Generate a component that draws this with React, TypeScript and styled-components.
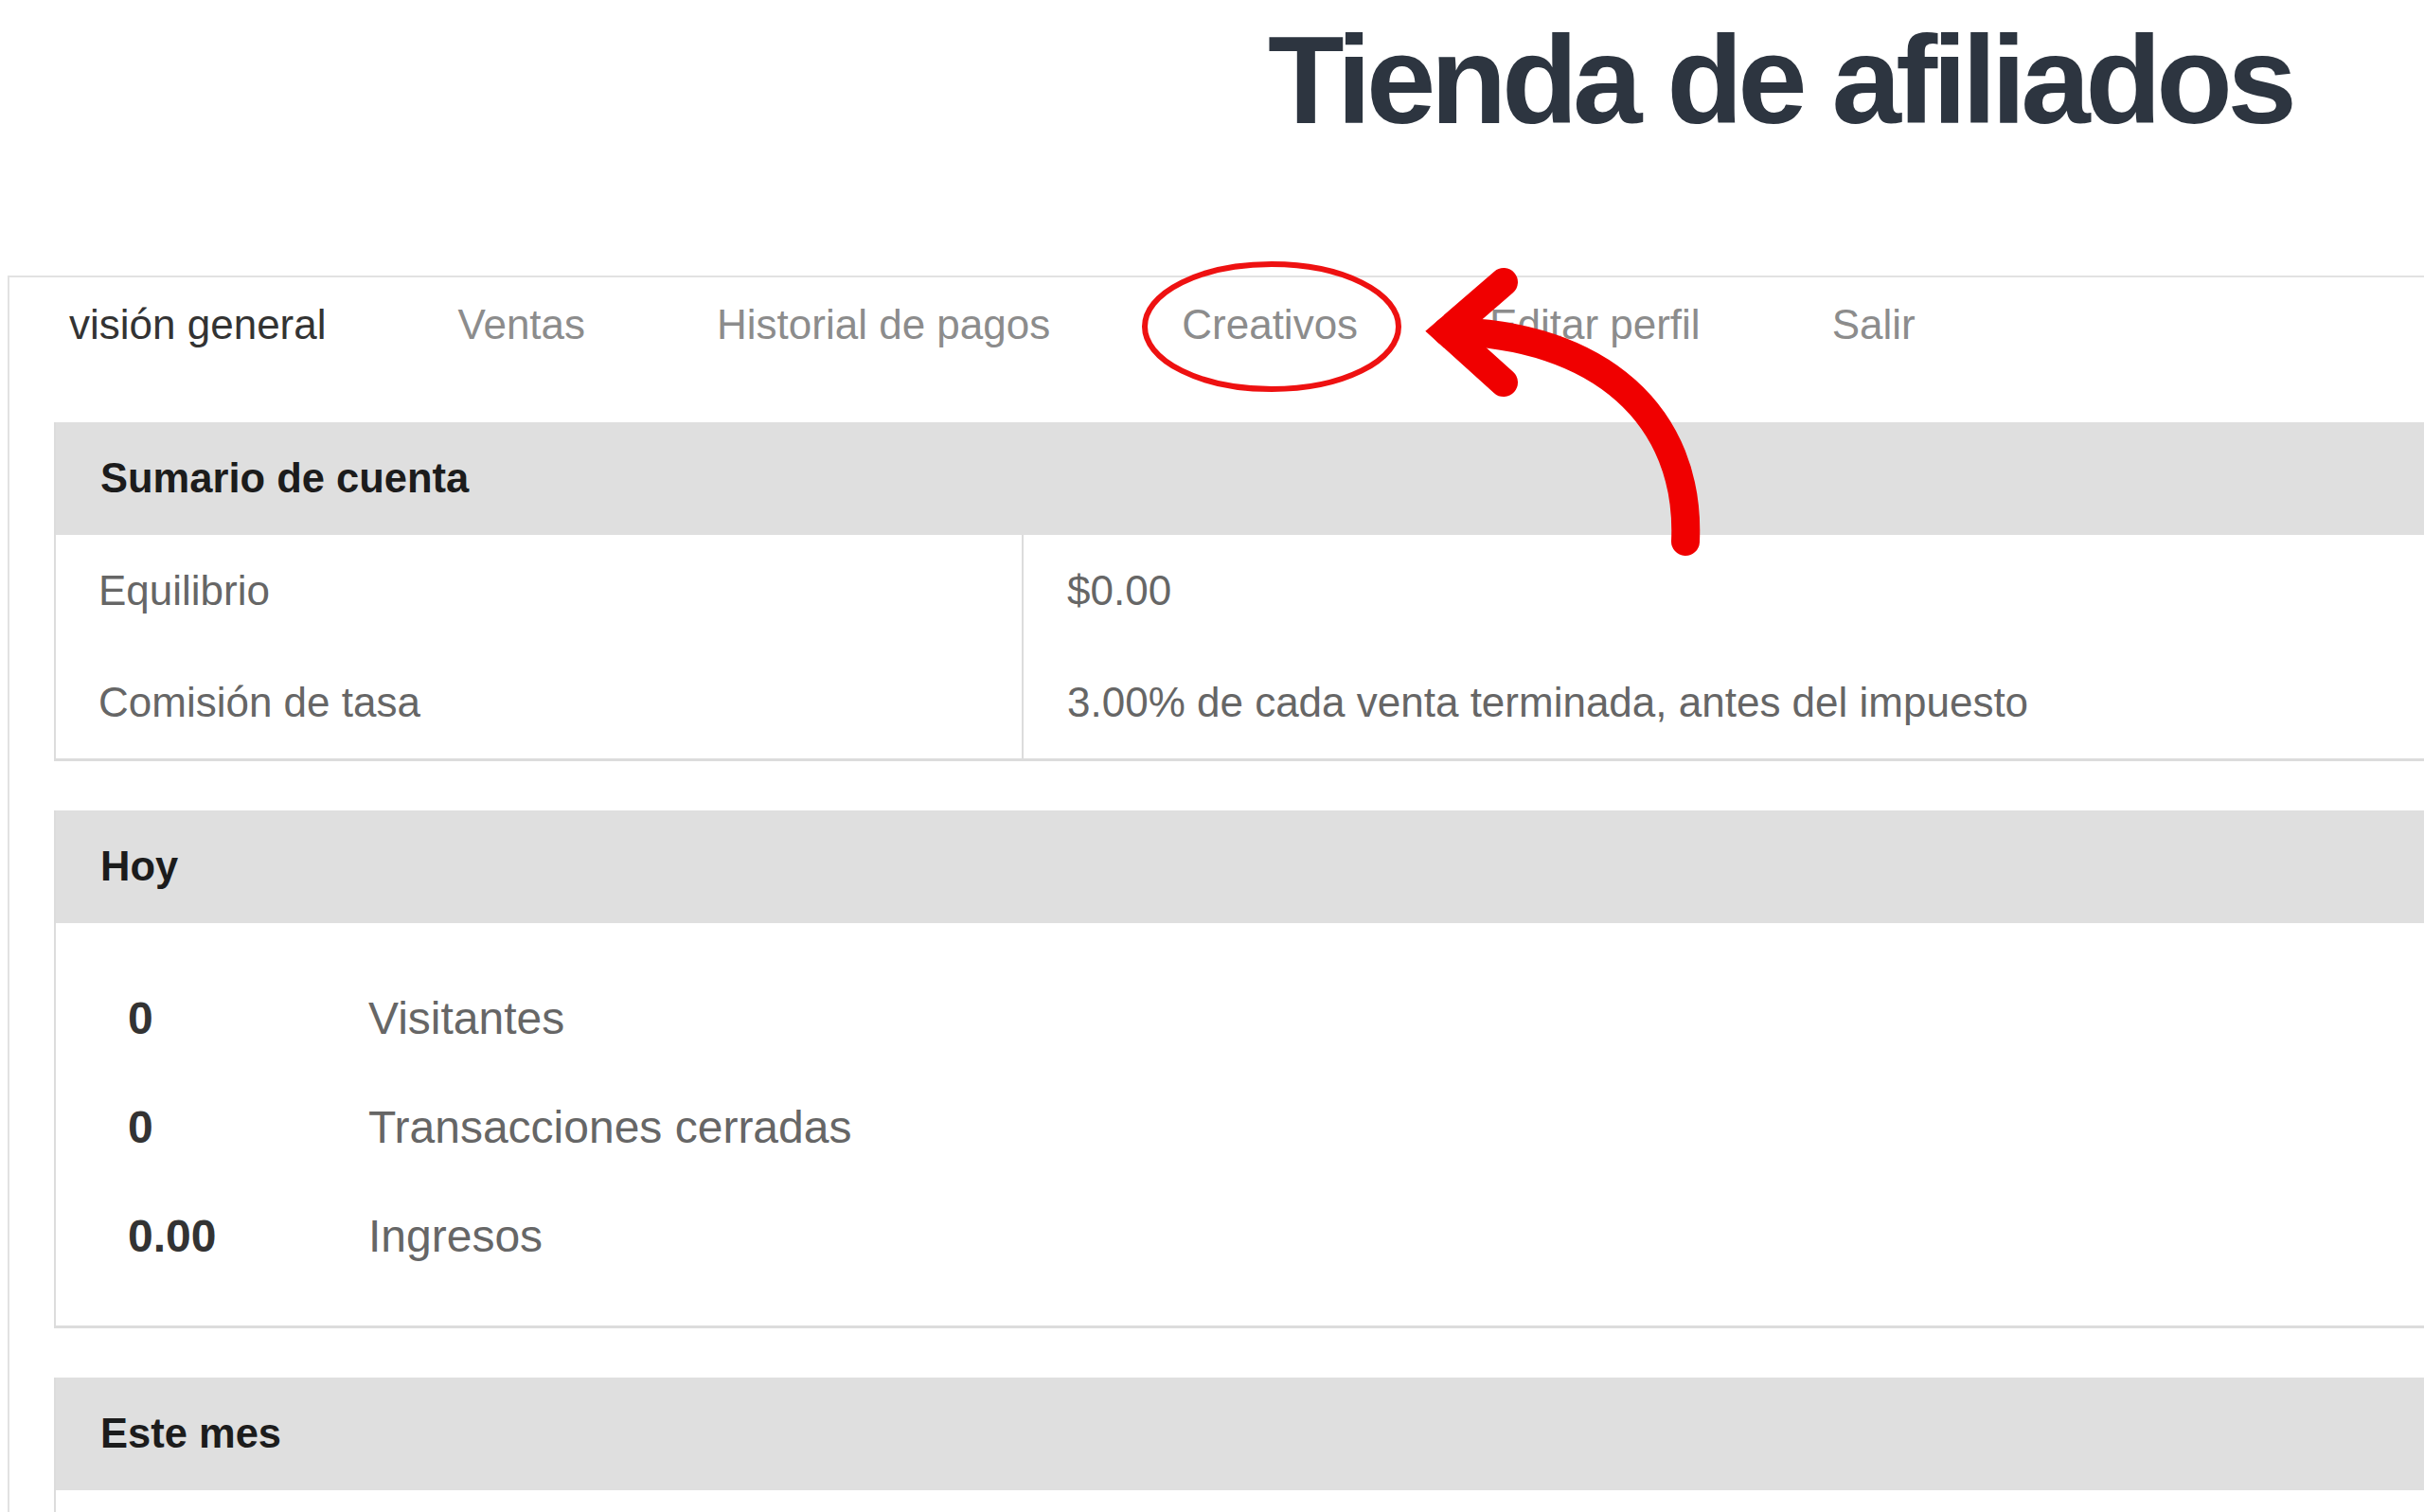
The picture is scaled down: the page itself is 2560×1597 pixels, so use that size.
import { createGlobalStyle, styled } from 'styled-components';

const GlobalStyle = createGlobalStyle`
  html, body {
    margin: 0;
    padding: 0;
    background: #fff;
    overflow: hidden;
  }

  body {
    font-family: 'Liberation Sans', Arial, Helvetica, sans-serif;
    color: #333;
  }
`;

const Page = styled.div`
  position: relative;
  width: 100%;
  min-height: 1597px;
`;

const Header = styled.header`
  height: 291px;
  padding-left: 1339px;
  box-sizing: border-box;
`;

const Title = styled.h1`
  margin: 0;
  padding-top: 19px;
  font-size: 132px;
  line-height: 1;
  font-weight: 700;
  letter-spacing: -5.5px;
  color: #2d3540;
  white-space: nowrap;
`;

const Shell = styled.div`
  margin-left: 8px;
  width: calc(100% + 40px);
  border-top: 2px solid #e2e2e2;
  border-left: 2px solid #e2e2e2;
  box-sizing: border-box;
`;

const Tabs = styled.nav`
  display: flex;
  align-items: center;
  gap: 139px;
  height: 100px;
  padding-left: 63px;
`;

const Tab = styled.a<{ $active?: boolean }>`
  font-size: 44px;
  color: ${(p) => (p.$active ? '#333' : '#8c8c8c')};
  text-decoration: none;
  white-space: nowrap;
  cursor: pointer;
`;

const Sections = styled.div`
  display: flex;
  flex-direction: column;
  gap: 52px;
  padding: 53px 0 0 47px;
`;

const Panel = styled.section`
  border-left: 2px solid #dcdcdc;
  border-bottom: 3px solid #dcdcdc;
  background: #fff;
`;

const PanelHead = styled.h2`
  margin: 0;
  height: 119px;
  display: flex;
  align-items: center;
  padding-left: 47px;
  background: #dfdfdf;
  font-size: 43.5px;
  font-weight: 700;
  color: #1c1c1c;
`;

const SummaryGrid = styled.div`
  display: grid;
  grid-template-columns: 1020px 1fr;
  grid-auto-rows: 118px;
`;

const Cell = styled.div<{ $value?: boolean }>`
  display: flex;
  align-items: center;
  padding-left: ${(p) => (p.$value ? '46px' : '45px')};
  border-left: ${(p) => (p.$value ? '2px solid #dcdcdc' : 'none')};
  font-size: 44px;
  color: #666;
  white-space: nowrap;
`;

const StatsBody = styled.div<{ $open?: boolean }>`
  padding: ${(p) => (p.$open ? '0' : '43px 0 37px')};
  min-height: ${(p) => (p.$open ? '160px' : '0')};
`;

const StatRow = styled.div`
  display: grid;
  grid-template-columns: 254px 1fr;
  align-items: center;
  height: 115px;
  padding-left: 76px;
  font-size: 48px;
`;

const StatValue = styled.span`
  font-weight: 700;
  color: #333;
`;

const StatLabel = styled.span`
  color: #666;
`;

const Markup = styled.svg`
  position: absolute;
  top: 0;
  left: 0;
  pointer-events: none;
`;

const tabs = [
  'visión general',
  'Ventas',
  'Historial de pagos',
  'Creativos',
  'Editar perfil',
  'Salir',
];

const summary = [
  ['Equilibrio', '$0.00'],
  ['Comisión de tasa', '3.00% de cada venta terminada, antes del impuesto'],
];

const today = [
  ['0', 'Visitantes'],
  ['0', 'Transacciones cerradas'],
  ['0.00', 'Ingresos'],
];

export default function App() {
  return (
    <Page>
      <GlobalStyle />
      <Header>
        <Title>Tienda de afiliados</Title>
      </Header>

      <Shell>
        <Tabs>
          {tabs.map((t, i) => (
            <Tab key={t} $active={i === 0}>
              {t}
            </Tab>
          ))}
        </Tabs>

        <Sections>
          <Panel>
            <PanelHead>Sumario de cuenta</PanelHead>
            <SummaryGrid>
              {summary.flatMap(([label, value]) => [
                <Cell key={label}>{label}</Cell>,
                <Cell key={value} $value>
                  {value}
                </Cell>,
              ])}
            </SummaryGrid>
          </Panel>

          <Panel>
            <PanelHead>Hoy</PanelHead>
            <StatsBody>
              {today.map(([value, label]) => (
                <StatRow key={label}>
                  <StatValue>{value}</StatValue>
                  <StatLabel>{label}</StatLabel>
                </StatRow>
              ))}
            </StatsBody>
          </Panel>

          <Panel>
            <PanelHead>Este mes</PanelHead>
            <StatsBody $open />
          </Panel>
        </Sections>
      </Shell>

      {/* red ring around the Creativos tab and the curved pointer */}
      <Markup width="2560" height="1597" viewBox="0 0 2560 1597">
        <ellipse
          cx="1343"
          cy="345"
          rx="134"
          ry="66"
          fill="none"
          stroke="#ee1111"
          strokeWidth="6"
        />
        <path
          d="M1780 572 C1786 440 1690 352 1528 350"
          fill="none"
          stroke="#f00000"
          strokeWidth="30"
          strokeLinecap="round"
        />
        <path
          d="M1588 298 L1528 350 L1588 404"
          fill="none"
          stroke="#f00000"
          strokeWidth="30"
          strokeLinecap="round"
          strokeLinejoin="miter"
          strokeMiterlimit="6"
        />
      </Markup>
    </Page>
  );
}
